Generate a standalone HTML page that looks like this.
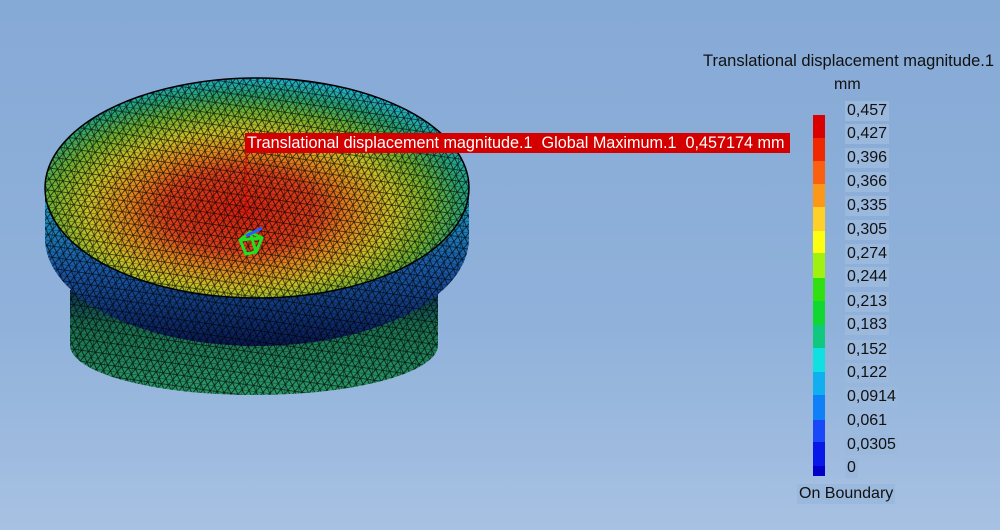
<!DOCTYPE html>
<html><head><meta charset="utf-8"><style>
html,body{margin:0;padding:0}
body{width:1000px;height:530px;overflow:hidden;background:linear-gradient(#86aad6,#8fb1da 60%,#a7c1e2);font-family:"Liberation Sans",sans-serif;position:relative}
.t{position:absolute;color:#111;white-space:nowrap}
.lab{position:absolute;left:845px;font-size:16px;color:#111;background:#9bb8dd;padding:0 2px;line-height:20px}
.bar{position:absolute;left:813px;width:12px}
</style></head><body>
<svg width="1000" height="530" style="position:absolute;left:0;top:0">
<defs>
<pattern id="m" width="14" height="11" patternUnits="userSpaceOnUse" patternTransform="rotate(8)">
<path d="M0 0H14M0 5.5H14M0 0L7 11M7 0L0 11M7 0L14 11M14 0L7 11M0 0V11" stroke="#000" stroke-width="0.8" fill="none" opacity="0.8"/>
</pattern>
<radialGradient id="top" cx="0.46" cy="0.6" r="0.6">
<stop offset="0" stop-color="#d42010"/><stop offset="0.3" stop-color="#d8401a"/><stop offset="0.45" stop-color="#e08a20"/><stop offset="0.6" stop-color="#c8c028"/><stop offset="0.75" stop-color="#70b030"/><stop offset="0.88" stop-color="#28a070"/><stop offset="1" stop-color="#20b0c8"/>
</radialGradient>
<linearGradient id="side" x1="0" y1="0" x2="0" y2="1">
<stop offset="0" stop-color="#20a8c8"/><stop offset="0.5" stop-color="#1a5aa8"/><stop offset="1" stop-color="#081850"/>
</linearGradient>
<linearGradient id="low" x1="0" y1="0" x2="0" y2="1">
<stop offset="0" stop-color="#0c3050"/><stop offset="0.35" stop-color="#1a7050"/><stop offset="1" stop-color="#2a9a6a"/>
</linearGradient>
</defs>
<path d="M70 290H438V345A184 50 0 0 1 70 345Z" fill="url(#low)"/>
<path d="M70 290H438V345A184 50 0 0 1 70 345Z" fill="url(#m)"/>
<path d="M45 188V238A212 108 0 0 0 469 238V188Z" fill="url(#side)"/>
<path d="M45 188V238A212 108 0 0 0 469 238V188Z" fill="url(#m)"/>
<ellipse cx="257" cy="188" rx="212" ry="110" fill="url(#top)"/>
<ellipse cx="257" cy="188" rx="212" ry="110" fill="url(#m)"/>
<ellipse cx="257" cy="188" rx="212" ry="110" fill="none" stroke="#000" stroke-width="1.5"/>
<line x1="246" y1="153" x2="246" y2="215" stroke="#e00" stroke-width="1"/>
<path d="M240 240L250 232L262 238L256 252L246 254Z M240 240L262 238 M250 232L256 252" stroke="#20e020" stroke-width="3" fill="none"/>
<path d="M246 236L262 228" stroke="#2060ff" stroke-width="3"/>
</svg>
<div style="position:absolute;left:245px;top:133px;width:545px;height:20px;background:#d40000"></div>
<div class="t" style="left:247px;top:134px;color:#fff;font-size:16.2px;line-height:18px">Translational displacement magnitude.1&nbsp; Global Maximum.1&nbsp; 0,457174 mm</div>
<div class="t" style="left:703px;top:52px;font-size:16.5px">Translational displacement magnitude.1</div>
<div class="t" style="left:834px;top:76px;font-size:16px">mm</div>
<div class="bar" style="top:115px;height:23px;background:#d80000"></div>
<div class="bar" style="top:138px;height:23px;background:#f02800"></div>
<div class="bar" style="top:161px;height:23px;background:#fa6010"></div>
<div class="bar" style="top:184px;height:23px;background:#fc9818"></div>
<div class="bar" style="top:207px;height:24px;background:#fed028"></div>
<div class="bar" style="top:231px;height:22px;background:#fefe10"></div>
<div class="bar" style="top:253px;height:25px;background:#a0f010"></div>
<div class="bar" style="top:278px;height:23px;background:#30e010"></div>
<div class="bar" style="top:301px;height:24px;background:#10d830"></div>
<div class="bar" style="top:325px;height:23px;background:#10c880"></div>
<div class="bar" style="top:348px;height:24px;background:#10e0e0"></div>
<div class="bar" style="top:372px;height:23px;background:#10b0f0"></div>
<div class="bar" style="top:395px;height:25px;background:#1080f8"></div>
<div class="bar" style="top:420px;height:22px;background:#1848f8"></div>
<div class="bar" style="top:442px;height:24px;background:#0818e8"></div>
<div class="bar" style="top:466px;height:10px;background:#0000c8"></div>
<div class="lab" style="top:101px">0,457</div>
<div class="lab" style="top:124px">0,427</div>
<div class="lab" style="top:148px">0,396</div>
<div class="lab" style="top:172px">0,366</div>
<div class="lab" style="top:196px">0,335</div>
<div class="lab" style="top:220px">0,305</div>
<div class="lab" style="top:244px">0,274</div>
<div class="lab" style="top:267px">0,244</div>
<div class="lab" style="top:292px">0,213</div>
<div class="lab" style="top:315px">0,183</div>
<div class="lab" style="top:340px">0,152</div>
<div class="lab" style="top:363px">0,122</div>
<div class="lab" style="top:387px">0,0914</div>
<div class="lab" style="top:411px">0,061</div>
<div class="lab" style="top:435px">0,0305</div>
<div class="lab" style="top:458px">0</div>
<div class="lab" style="left:797px;top:484px">On Boundary</div>
</body></html>
